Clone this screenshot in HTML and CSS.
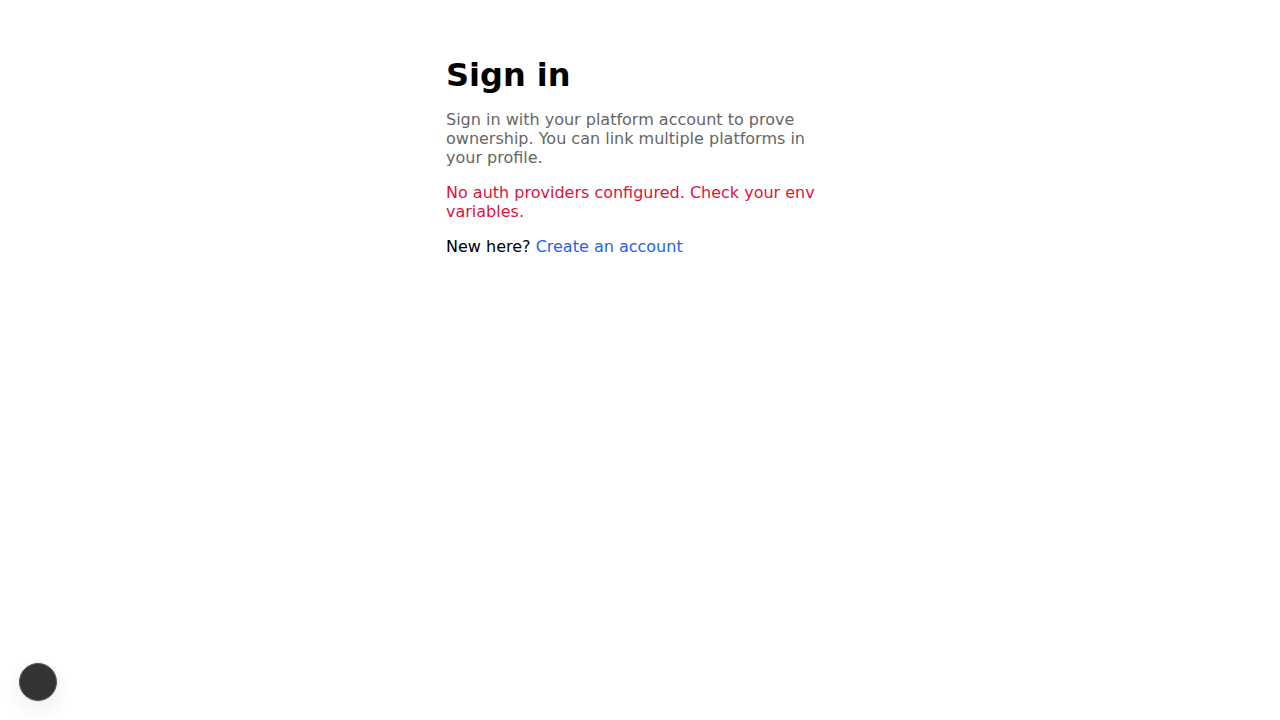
FILE: index.html
```html
<!DOCTYPE html>
<html lang="en">
<head>
<meta charset="utf-8">
<title>Sign in</title>
<link rel="stylesheet" href="styles.css">
</head>
<body>
<main class="page">
  <h1 class="title">Sign in</h1>
  <p class="lead">Sign in with your platform account to prove ownership. You can link multiple platforms in your profile.</p>
  <p class="error">No auth providers configured. Check your env variables.</p>
  <p class="signup">New here? <a class="link" href="#">Create an account</a></p>
</main>
<button class="dev-indicator" aria-label="Open dev tools"></button>
</body>
</html>
```
FILE: styles.css
```css
html, body {
  margin: 0;
  padding: 0;
  background: #ffffff;
}
body {
  font-family: "DejaVu Sans", sans-serif;
  font-size: 16px;
  color: #000;
}
.page {
  max-width: 388px;
  margin: 0 auto;
  padding: 57px 16px 0;
}
.title {
  margin: 0 0 16px;
  font-size: 32px;
  font-weight: bold;
  line-height: 37px;
}
.lead {
  margin: 0 0 16px;
  color: #666666;
  line-height: 19px;
}
.error {
  margin: 0 0 16px;
  color: #dc143c;
  line-height: 19px;
}
.signup {
  margin: 0;
  line-height: 19px;
}
.link {
  color: #2563eb;
  text-decoration: none;
}
.dev-indicator {
  position: fixed;
  left: 19px;
  bottom: 19px;
  width: 38px;
  height: 38px;
  padding: 0;
  border-radius: 50%;
  border: 1px solid #555;
  background: #333333;
  box-shadow: 0 0 0 1px rgba(0,0,0,0.05), 0 8px 24px rgba(0,0,0,0.08);
  cursor: pointer;
}
```
